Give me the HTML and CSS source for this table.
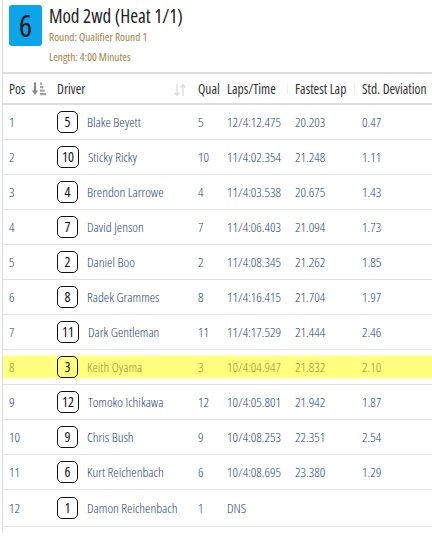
FILE: index.html
```html
<!DOCTYPE html>
<html>
<head>
<meta charset="utf-8">
<link rel="stylesheet" href="styles.css">
</head>
<body>
<div class="panel">
  <div class="head">
    <div class="heat-no">6</div>
    <div class="info">
      <div class="title">Mod 2wd (Heat 1/1)</div>
      <div class="meta">Round: Qualifier Round 1</div>
      <div class="meta">Length: 4:00 Minutes</div>
    </div>
  </div>
  <table class="results">
    <colgroup>
      <col class="c-pos"><col class="c-drv"><col class="c-qual"><col class="c-laps"><col class="c-fast"><col class="c-std">
    </colgroup>
    <thead>
      <tr>
        <th><span class="th-in">Pos <svg class="sort-on" width="14" height="14" viewBox="0 0 14 14"><path d="M3 0.5v9" stroke="#8a8a8a" stroke-width="2.2"/><path d="M-0.2 8.5l3.2 4.5 3.2-4.5z" fill="#8a8a8a"/><rect x="8" y="0.5" width="2.2" height="2.2" fill="#a0a0a0"/><rect x="8" y="4" width="3.3" height="2.2" fill="#a0a0a0"/><rect x="8" y="7.5" width="4.6" height="2.2" fill="#a0a0a0"/><rect x="8" y="11" width="6" height="2.2" fill="#a0a0a0"/></svg></span></th>
        <th class="sortable">Driver<svg class="sort-off" width="12" height="14" viewBox="0 0 12 14"><path d="M3 1v11M0.5 9.5L3 12.5 5.5 9.5M9 13V2M6.5 4.5L9 1.5 11.5 4.5" stroke="#dcdcdc" stroke-width="1.3" fill="none"/></svg></th>
        <th>Qual</th>
        <th class="sortable">Laps/Time<span class="tick"></span></th>
        <th class="sortable">Fastest Lap<span class="tick"></span></th>
        <th>Std. Deviation</th>
      </tr>
    </thead>
    <tbody>
      <tr><td>1</td><td><span class="car">5</span><span class="name">Blake Beyett</span></td><td>5</td><td>12/4:12.475</td><td>20.203</td><td>0.47</td></tr>
      <tr><td>2</td><td><span class="car">10</span><span class="name">Sticky Ricky</span></td><td>10</td><td>11/4:02.354</td><td>21.248</td><td>1.11</td></tr>
      <tr><td>3</td><td><span class="car">4</span><span class="name">Brendon Larrowe</span></td><td>4</td><td>11/4:03.538</td><td>20.675</td><td>1.43</td></tr>
      <tr><td>4</td><td><span class="car">7</span><span class="name">David Jenson</span></td><td>7</td><td>11/4:06.403</td><td>21.094</td><td>1.73</td></tr>
      <tr><td>5</td><td><span class="car">2</span><span class="name">Daniel Boo</span></td><td>2</td><td>11/4:08.345</td><td>21.262</td><td>1.85</td></tr>
      <tr><td>6</td><td><span class="car">8</span><span class="name">Radek Grammes</span></td><td>8</td><td>11/4:16.415</td><td>21.704</td><td>1.97</td></tr>
      <tr><td>7</td><td><span class="car">11</span><span class="name">Dark Gentleman</span></td><td>11</td><td>11/4:17.529</td><td>21.444</td><td>2.46</td></tr>
      <tr class="hl"><td>8</td><td><span class="car">3</span><span class="name">Keith Oyama</span></td><td>3</td><td>10/4:04.947</td><td>21.832</td><td>2.10</td></tr>
      <tr><td>9</td><td><span class="car">12</span><span class="name">Tomoko Ichikawa</span></td><td>12</td><td>10/4:05.801</td><td>21.942</td><td>1.87</td></tr>
      <tr><td>10</td><td><span class="car">9</span><span class="name">Chris Bush</span></td><td>9</td><td>10/4:08.253</td><td>22.351</td><td>2.54</td></tr>
      <tr><td>11</td><td><span class="car">6</span><span class="name">Kurt Reichenbach</span></td><td>6</td><td>10/4:08.695</td><td>23.380</td><td>1.29</td></tr>
      <tr class="last"><td>12</td><td><span class="car">1</span><span class="name">Damon Reichenbach</span></td><td>1</td><td>DNS</td><td></td><td></td></tr>
    </tbody>
  </table>
</div>
</body>
</html>
```

FILE: styles.css
```css
html, body {
  margin: 0;
  padding: 0;
  background: #fff;
}
body {
  font-family: "Open Sans", "Liberation Sans Narrow", sans-serif;
  font-stretch: 75%;
  font-weight: 300;
  color: #333;
  overflow: hidden;
}
.panel {
  margin-left: 2px;
  border-left: 1px solid #dcdcdc;
  padding-bottom: 6px;
}
.head {
  display: flex;
  gap: 7px;
  padding: 5px 0 0 6px;
  height: 72px;
  box-sizing: border-box;
}
.heat-no {
  width: 33px;
  height: 41px;
  background: #0ba5ec;
  border-radius: 3px;
  color: #111;
  font-size: 31px;
  font-weight: 400;
  line-height: 41px;
  text-align: center;
}
.info {
  display: flex;
  flex-direction: column;
}
.title {
  font-size: 19px;
  line-height: 22px;
  color: #222;
  font-weight: 400;
}
.meta {
  font-size: 11.3px;
  line-height: 20px;
  color: #a5813f;
  font-weight: 400;
}
.results {
  width: 429px;
  border-collapse: collapse;
  table-layout: fixed;
}
.c-pos { width: 48px; }
.c-drv { width: 141px; }
.c-qual { width: 29px; }
.c-laps { width: 68px; }
.c-fast { width: 67px; }
.c-std { width: 76px; }
th {
  text-align: left;
  font-weight: 400;
  font-size: 13.5px;
  color: #333;
  height: 29px;
  padding: 0 0 0 6px;
  border-top: 2px solid #dddddd;
  border-bottom: 2px solid #dddddd;
  white-space: nowrap;
  position: relative;
}
.th-in {
  display: inline-flex;
  align-items: center;
  gap: 7px;
}
.sort-off {
  position: absolute;
  right: 6px;
  top: 9px;
}
.tick {
  position: absolute;
  right: 1px;
  top: 10px;
  width: 1px;
  height: 10px;
  background: #eeeeee;
}
td {
  font-size: 13.5px;
  color: #24467a;
  height: 35px;
  padding: 0 0 0 6px;
  border-bottom: 1px solid #e2e2e2;
  white-space: nowrap;
  box-sizing: border-box;
}
tr.last td {
  height: 37px;
}
.car {
  display: inline-block;
  min-width: 11px;
  padding: 0 4px;
  height: 20px;
  line-height: 20px;
  border: 1.5px solid #111;
  border-radius: 5px;
  color: #111;
  font-size: 14px;
  font-weight: 500;
  text-align: center;
  vertical-align: middle;
}
.name {
  margin-left: 9px;
  vertical-align: middle;
}
tr.hl td {
  color: #99922f;
  background: linear-gradient(to bottom, transparent 6px, #ffff80 6px, #ffff80 29px, transparent 29px);
}
```
